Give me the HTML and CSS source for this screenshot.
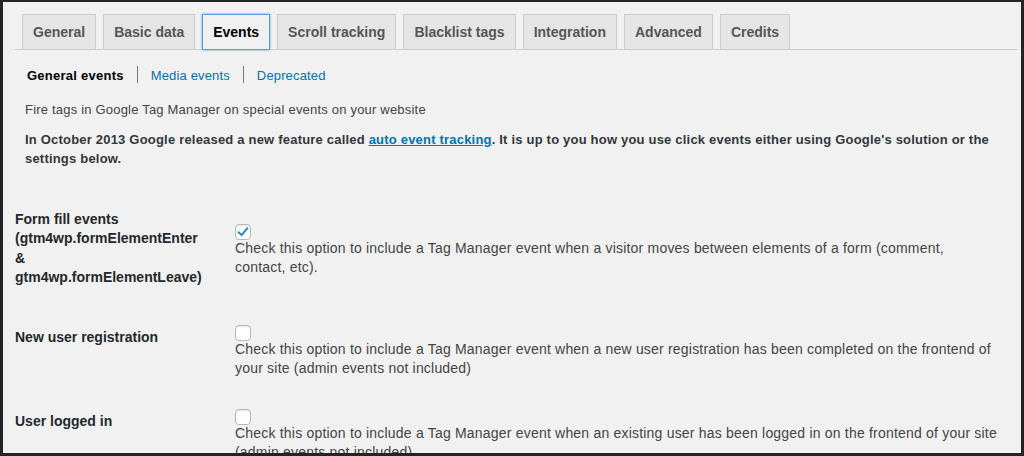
FILE: index.html
```html
<!DOCTYPE html>
<html lang="en">
<head>
<meta charset="utf-8">
<title>Events</title>
<link rel="stylesheet" href="styles.css">
</head>
<body>
<div class="frame">
  <div class="wrap">
    <nav class="tabs">
      <a class="tab">General</a>
      <a class="tab">Basic data</a>
      <a class="tab active">Events</a>
      <a class="tab">Scroll tracking</a>
      <a class="tab">Blacklist tags</a>
      <a class="tab">Integration</a>
      <a class="tab">Advanced</a>
      <a class="tab">Credits</a>
    </nav>
    <ul class="subnav">
      <li class="current">General events</li>
      <li class="sep"></li>
      <li><a class="link">Media events</a></li>
      <li class="sep"></li>
      <li><a class="link">Deprecated</a></li>
    </ul>
    <p class="intro">Fire tags in Google Tag Manager on special events on your website</p>
    <p class="notice">In October 2013 Google released a new feature called <a class="ulink">auto event tracking</a>. It is up to you how you use click events either using Google's solution or the settings below.</p>
    <div class="form-table">
      <div class="row">
        <div class="th">Form fill events (gtm4wp.formElementEnter &amp; gtm4wp.formElementLeave)</div>
        <div class="td">
          <span class="cb"><svg width="16" height="16" viewBox="0 0 16 16"><path d="M3.6 8.2 L6.6 11.1 L12.4 4.2" fill="none" stroke="#1e8cbe" stroke-width="2" stroke-linecap="round" stroke-linejoin="round"/></svg></span>
          <p class="desc">Check this option to include a Tag Manager event when a visitor moves between elements of a form (comment,<br>contact, etc).</p>
        </div>
      </div>
      <div class="row">
        <div class="th">New user registration</div>
        <div class="td">
          <span class="cb"></span>
          <p class="desc">Check this option to include a Tag Manager event when a new user registration has been completed on the frontend of<br>your site (admin events not included)</p>
        </div>
      </div>
      <div class="row">
        <div class="th">User logged in</div>
        <div class="td">
          <span class="cb"></span>
          <p class="desc">Check this option to include a Tag Manager event when an existing user has been logged in on the frontend of your site<br>(admin events not included)</p>
        </div>
      </div>
    </div>
  </div>
</div>
</body>
</html>
```
FILE: styles.css
```css
html, body {
  margin: 0;
  padding: 0;
  background: #f1f1f1;
}

body {
  font-family: "Liberation Sans", Arial, sans-serif;
  color: #444;
}

.frame {
  width: 1024px;
  height: 456px;
  box-sizing: border-box;
  border-style: solid;
  border-color: #242424;
  border-width: 2px 3px 3px 3px;
  background: #f1f1f1;
  overflow: hidden;
}

.wrap {
  margin: 12px 4px 0 12px;
}

.tabs {
  display: flex;
  align-items: flex-end;
  border-bottom: 1px solid #ccc;
}

.tab {
  display: block;
  margin-left: 7px;
  margin-bottom: -1px;
  padding: 5px 10px;
  border: 1px solid #ccc;
  background: #e5e5e5;
  color: #555;
  font-size: 14px;
  font-weight: 700;
  line-height: 24px;
  white-space: nowrap;
}

.tab.active {
  background: #f1f1f1;
  color: #000;
  border-color: #5b9dd9;
  box-shadow: 0 0 2px 0 rgba(30, 140, 190, 0.8);
  position: relative;
}

.subnav {
  list-style: none;
  margin: 16px 0 0 12px;
  padding: 0;
  display: flex;
  font-size: 13px;
  line-height: 19.5px;
  letter-spacing: 0.15px;
}

.subnav li {
  display: block;
}

.subnav .current {
  color: #000;
  font-weight: 700;
  letter-spacing: 0.25px;
}

.subnav .sep {
  width: 1px;
  height: 17px;
  background: #7a7a7a;
  margin: 0 13px;
}

.link {
  color: #0073aa;
}

.intro {
  margin: 14.5px 0 0 10px;
  font-size: 13px;
  line-height: 19.5px;
  letter-spacing: 0.2px;
  color: #444;
}

.notice {
  margin: 10.5px 20px 0 10px;
  font-size: 13px;
  line-height: 19px;
  letter-spacing: 0.2px;
  font-weight: 700;
  color: #32373c;
}

.ulink {
  color: #0073aa;
  text-decoration: underline;
}

.form-table {
  margin-top: 24px;
}

.row {
  display: grid;
  grid-template-columns: 210px 1fr;
  align-items: center;
}

.th {
  align-self: start;
  padding: 17.5px 18px 21.5px 0;
  font-size: 14px;
  line-height: 19.6px;
  font-weight: 700;
  color: #23282d;
}

.row + .row .th {
  padding-top: 19px;
}

.td {
  padding: 15.5px 0 15.5px 10px;
}

.cb {
  display: block;
  box-sizing: border-box;
  width: 16px;
  height: 16px;
  margin-bottom: -1px;
  border: 1px solid #b4b9be;
  border-radius: 4px;
  background: #fff;
  box-shadow: inset 0 1px 2px rgba(0, 0, 0, 0.1);
  position: relative;
}

.cb svg {
  position: absolute;
  left: -1px;
  top: -1px;
}

.desc {
  margin: 0;
  font-size: 14px;
  line-height: 19px;
  letter-spacing: 0.2px;
  white-space: nowrap;
  color: #444;
}
```
